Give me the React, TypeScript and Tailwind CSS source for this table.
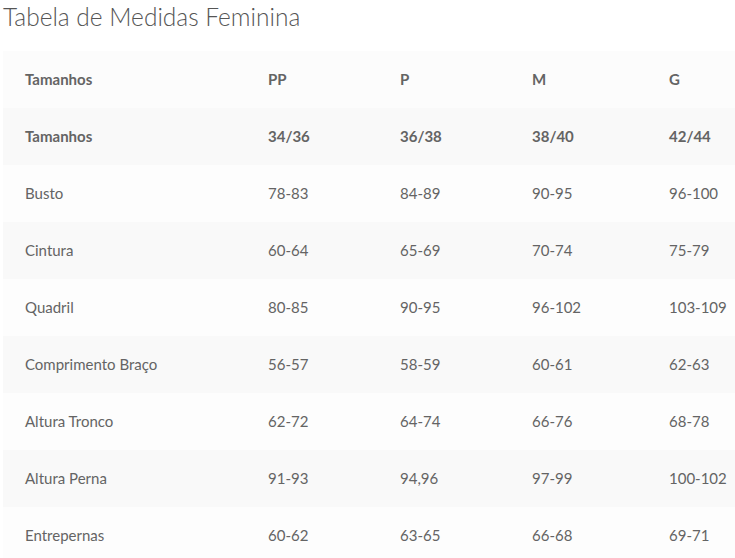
import React from "react";

const rows: string[][] = [
  ["Tamanhos", "34/36", "36/38", "38/40", "42/44"],
  ["Busto", "78-83", "84-89", "90-95", "96-100"],
  ["Cintura", "60-64", "65-69", "70-74", "75-79"],
  ["Quadril", "80-85", "90-95", "96-102", "103-109"],
  ["Comprimento Braço", "56-57", "58-59", "60-61", "62-63"],
  ["Altura Tronco", "62-72", "64-74", "66-76", "68-78"],
  ["Altura Perna", "91-93", "94,96", "97-99", "100-102"],
  ["Entrepernas", "60-62", "63-65", "66-68", "69-71"],
];

const header = ["Tamanhos", "PP", "P", "M", "G"];

export default function App() {
  return (
    <div
      className="w-[735px] h-[558px] overflow-hidden bg-white text-[#646464]"
      style={{ fontFamily: "Lato, 'Open Sans', sans-serif" }}
    >
      <h1 className="pl-[3px] pt-[2px] h-[51px] text-[24.5px] font-light leading-[30px] text-[#555555]">
        Tabela de Medidas Feminina
      </h1>
      <div className="ml-[3px]">
        <div className="grid grid-cols-[243px_132px_132px_137px_1fr] h-[57px] items-center bg-[#fcfcfc] text-[15px] font-bold">
          {header.map((h, i) => (
            <div key={i} className="pl-[22px] whitespace-nowrap">
              {h}
            </div>
          ))}
        </div>
        {rows.map((r, ri) => (
          <div
            key={ri}
            className={`grid grid-cols-[243px_132px_132px_137px_1fr] h-[57px] items-center text-[15px] ${
              ri === 0 ? "font-bold" : "font-normal"
            } ${ri % 2 === 0 ? "bg-[#f9f9f9]" : "bg-[#fdfdfd]"}`}
          >
            {r.map((c, ci) => (
              <div key={ci} className="pl-[22px] whitespace-nowrap">
                {c}
              </div>
            ))}
          </div>
        ))}
      </div>
    </div>
  );
}
